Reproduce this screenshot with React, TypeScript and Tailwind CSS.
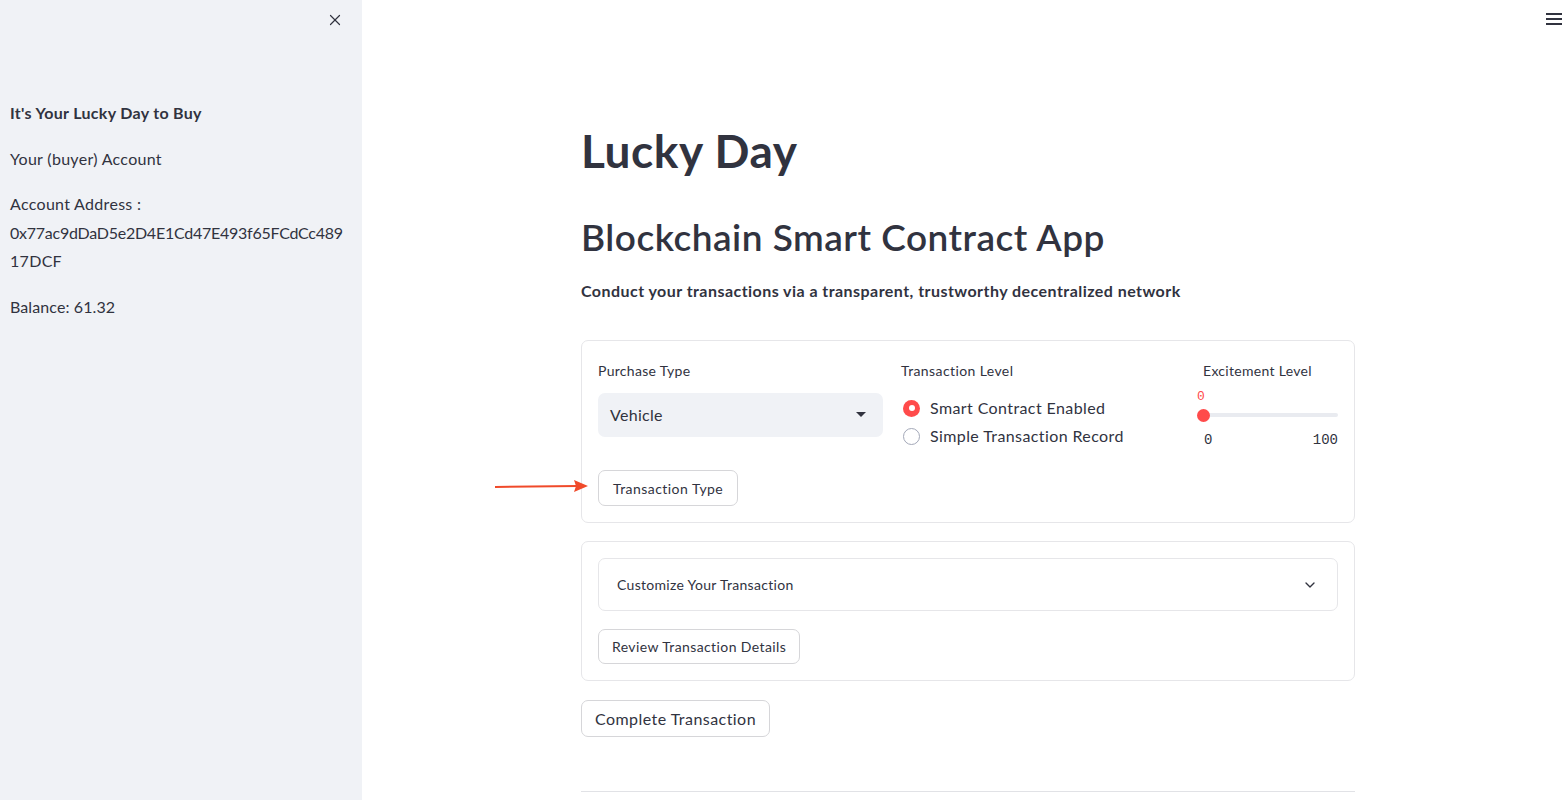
import { ChevronDown, X } from "lucide-react";

const sans = { fontFamily: "Lato, 'Noto Sans', sans-serif" };
const mono = { fontFamily: "'Liberation Mono', 'DejaVu Sans Mono', monospace" };

const Sidebar = () => {
    return (
        <aside className="w-[362px] shrink-0 min-h-[800px] bg-[#f0f2f6] relative text-[16px] text-[#31333f] tracking-[0.3px]">
            <button className="absolute left-[326px] top-[11px] text-[#31333f]">
                <X size={18} strokeWidth={1.6} />
            </button>
            <div className="pl-[10px] pt-[99px]">
                <p className="font-bold leading-[28px]">It's Your Lucky Day to Buy</p>
                <p className="mt-[18px] leading-[28px]">Your (buyer) Account</p>
                <p className="mt-[17px] leading-[28.5px]">
                    Account Address :<br />
                    <span className="tracking-[-0.25px]">0x77ac9dDaD5e2D4E1Cd47E493f65FCdCc489</span><br />
                    17DCF
                </p>
                <p className="mt-[17px] leading-[28px] tracking-[0.1px]">Balance: 61.32</p>
            </div>
        </aside>
    );
};

const Radio = ({ checked, label }: { checked: boolean; label: string }) => (
    <div className="flex items-center h-[28px]">
        {checked ? (
            <span className="ml-[2px] w-[17px] h-[17px] rounded-full bg-[#ff4b4b] flex items-center justify-center">
                <span className="w-[6px] h-[6px] rounded-full bg-white" />
            </span>
        ) : (
            <span className="ml-[2px] w-[17px] h-[17px] rounded-full border border-[#a3a8b8] bg-white" />
        )}
        <span className="ml-[10px] text-[16px] tracking-[0.4px] text-[#31333f]">{label}</span>
    </div>
);

const Slider = () => (
    <div>
        <div className="h-[28px] text-[14px] leading-[28px] tracking-[0.3px]">Excitement Level</div>
        <div className="mt-[4px] h-[16px] leading-[16px] text-[13px] text-[#ff4b4b] -ml-[6px]" style={mono}>0</div>
        <div className="relative h-[12px] mt-[4px]">
            <div className="absolute left-0 right-0 top-[4px] h-[4px] rounded bg-[#e9ebf0]" />
            <div className="absolute left-[-6px] top-0 w-[13px] h-[13px] rounded-full bg-[#ff4b4b]" />
        </div>
        <div className="mt-[9px] flex justify-between text-[14px] leading-[20px] text-[#31333f]" style={mono}>
            <span className="ml-[1px]">0</span>
            <span>100</span>
        </div>
    </div>
);

const Button = ({ label, className = "" }: { label: string; className?: string }) => (
    <button className={"border border-[#d6d6d9] rounded-[7px] bg-white text-[#31333f] " + className}>
        {label}
    </button>
);

const App = () => {
    return (
        <div className="flex min-h-[800px] bg-white text-[#31333f] overflow-hidden relative" style={sans}>
            <Sidebar />
            <main className="flex-1 relative">
                <div className="absolute right-[-6px] top-[13px] flex flex-col gap-[3px]">
                    <span className="block w-[22px] h-[2px] bg-[#31333f]" />
                    <span className="block w-[22px] h-[2px] bg-[#31333f]" />
                    <span className="block w-[22px] h-[2px] bg-[#31333f]" />
                </div>
                <svg className="absolute left-[128px] top-[476px]" width="110" height="20" viewBox="0 0 110 20">
                    <line x1="5" y1="11" x2="88" y2="10" stroke="#f04a2a" strokeWidth="2" />
                    <polygon points="98,10 84,4 86,10 84,16" fill="#f04a2a" />
                </svg>
                <div className="ml-[219px] w-[774px] pt-[124px]">
                    <h1 className="h-[54px] leading-[54px] text-[46px] font-bold tracking-[0.6px]">Lucky Day</h1>
                    <h2 className="mt-[37px] h-[44px] leading-[44px] text-[37px] font-semibold tracking-[0.5px]">
                        Blockchain Smart Contract App
                    </h2>
                    <p className="mt-[20px] h-[24px] leading-[24px] text-[16px] font-bold tracking-[0.45px]">
                        Conduct your transactions via a transparent, trustworthy decentralized network
                    </p>

                    <section className="mt-[37px] border border-[#e6e6e9] rounded-[7px] p-4">
                        <div className="grid grid-cols-[285px_284px_1fr] gap-[18px]">
                            <div>
                                <div className="h-[28px] text-[14px] leading-[28px] tracking-[0.3px]">Purchase Type</div>
                                <div className="mt-[8px] h-[44px] rounded-[7px] bg-[#f0f2f6] flex items-center justify-between pl-[12px] pr-[17px]">
                                    <span className="text-[16px] tracking-[0.3px]">Vehicle</span>
                                    <svg width="10" height="6" viewBox="0 0 10 6">
                                        <polygon points="0,0 10,0 5,5" fill="#31333f" />
                                    </svg>
                                </div>
                            </div>
                            <div>
                                <div className="h-[28px] text-[14px] leading-[28px] tracking-[0.4px]">Transaction Level</div>
                                <div className="mt-[9px]">
                                    <Radio checked label="Smart Contract Enabled" />
                                    <Radio checked={false} label="Simple Transaction Record" />
                                </div>
                            </div>
                            <Slider />
                        </div>
                        <Button label="Transaction Type" className="mt-[20px] h-[36px] px-[14px] text-[14px] tracking-[0.45px]" />
                    </section>

                    <section className="mt-[18px] border border-[#e6e6e9] rounded-[7px] p-4">
                        <div className="h-[53px] border border-[#e6e6e9] rounded-[7px] flex items-center justify-between pl-[18px] pr-[19px]">
                            <span className="text-[14px] tracking-[0.3px]">Customize Your Transaction</span>
                            <ChevronDown size={16} strokeWidth={2} />
                        </div>
                        <Button label="Review Transaction Details" className="mt-[18px] h-[35px] px-[13px] text-[14px] tracking-[0.4px]" />
                    </section>

                    <Button label="Complete Transaction" className="mt-[19px] h-[37px] px-[13px] text-[16px] tracking-[0.45px]" />

                    <hr className="mt-[54px] border-0 border-t border-[#e1e2e6]" />
                </div>
            </main>
        </div>
    );
};

export default App;
